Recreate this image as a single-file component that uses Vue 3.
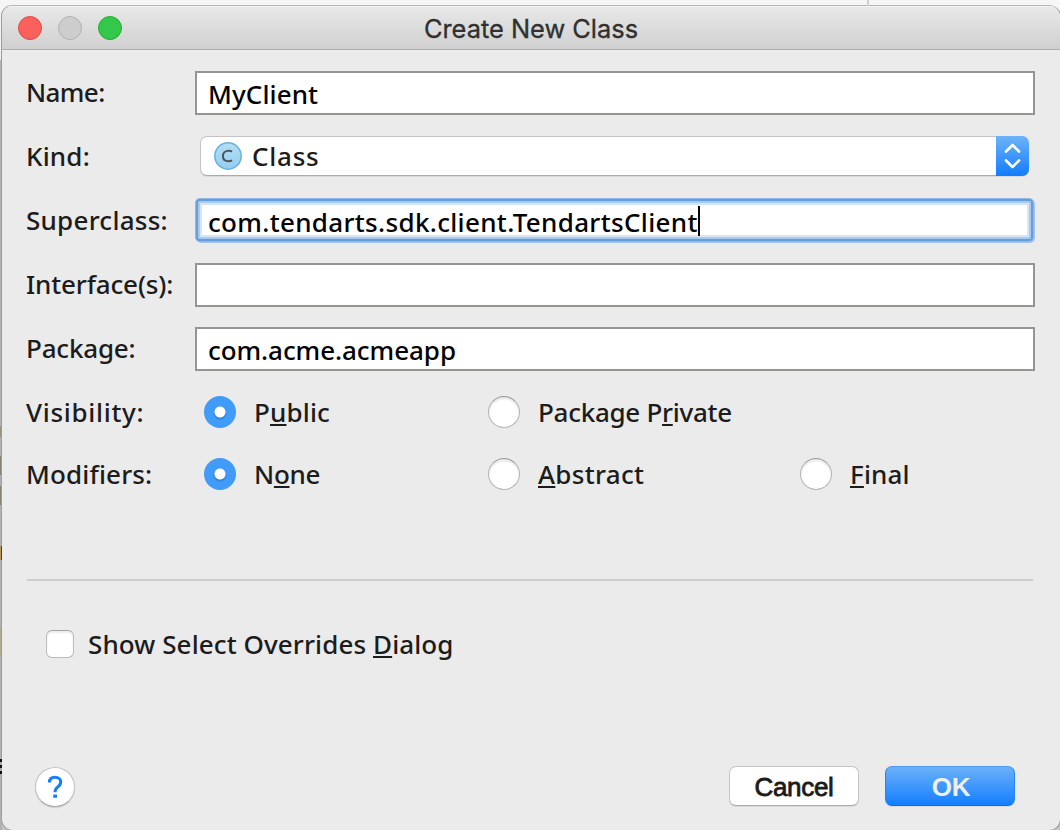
<script setup>
import { ref } from 'vue'

const name = ref('MyClient')
const superclass = ref('com.tendarts.sdk.client.TendartsClient')
const pkg = ref('com.acme.acmeapp')
</script>

<template>
  <div class="desktop">
    <span class="seam"></span>
    <span class="behind b1"></span>
    <span class="behind b2"></span>
    <span class="behind b3"></span>
    <span class="behind b4"></span>
    <span class="behind b5"></span>
    <span class="behind b6"></span>
    <section class="window">
      <header class="titlebar">
        <div class="lights">
          <i class="light red"></i><i class="light gray"></i><i class="light green"></i>
        </div>
        <h1>Create New Class</h1>
      </header>

      <main class="body">
        <div class="row">
          <label><span class="t-name">Name:</span></label>
          <div class="field"><span class="t-myclient">{{ name }}</span></div>
        </div>
        <div class="row">
          <label><span class="t-kind">Kind:</span></label>
          <div class="combo">
            <svg class="cicon" width="28" height="28" viewBox="0 0 28 28">
              <defs>
                <linearGradient id="cg" x1="0" y1="0" x2="0" y2="1">
                  <stop offset="0" stop-color="#b4def5" /><stop offset="1" stop-color="#93cff0" />
                </linearGradient>
              </defs>
              <circle cx="14" cy="14" r="13.2" fill="url(#cg)" stroke="#69b0df" stroke-width="1.5" />
              <path d="M18 9.6C17 8.9 16 8.7 14.7 8.7C11.2 8.7 8.9 10.9 8.9 14.1C8.9 17.3 11.2 19.3 14.6 19.3C16 19.3 17 19 18.1 18.4" fill="none" stroke="#4d565e" stroke-width="2" />
            </svg>
            <span class="t-class">Class</span>
            <div class="stepper">
              <svg width="33" height="40" viewBox="0 0 33 40">
                <path d="M10 15.5L16.5 9L23 15.5M10 24.5L16.5 31L23 24.5" fill="none" stroke="#fff" stroke-width="2.6" stroke-linecap="round" stroke-linejoin="round" />
              </svg>
            </div>
          </div>
        </div>
        <div class="row">
          <label><span class="t-super">Superclass:</span></label>
          <div class="field focus"><span class="t-tend">{{ superclass }}</span><i class="caret"></i></div>
        </div>
        <div class="row">
          <label><span class="t-iface">Interface(s):</span></label>
          <div class="field"></div>
        </div>
        <div class="row">
          <label><span class="t-package">Package:</span></label>
          <div class="field"><span class="t-acme">{{ pkg }}</span></div>
        </div>

        <div class="radios vis">
          <label><span class="t-vis">Visibility:</span></label>
          <div class="opt"><i class="radio on"></i><span class="t-public">P<u>u</u>blic</span></div>
          <div class="opt"><i class="radio"></i><span class="t-private">Package P<u>r</u>ivate</span></div>
        </div>
        <div class="radios mod">
          <label><span class="t-mod">Modifiers:</span></label>
          <div class="opt"><i class="radio on"></i><span class="t-none">N<u>o</u>ne</span></div>
          <div class="opt"><i class="radio"></i><span class="t-abs"><u>A</u>bstract</span></div>
          <div class="opt"><i class="radio"></i><span class="t-final"><u>F</u>inal</span></div>
        </div>

        <hr />

        <div class="check"><i class="box"></i><span class="t-show">Show Select Overrides <u>D</u>ialog</span></div>

        <footer>
          <button class="help" aria-label="Help">
            <svg width="40" height="40" viewBox="0 0 40 40">
              <path d="M14.4 15.6C14.4 12.3 16.6 10.3 20 10.3C23.4 10.3 25.7 12.3 25.7 15.1C25.7 17.3 24.6 18.6 22.9 19.9C20.9 21.4 20.1 22.4 20.1 24.6V25.2" fill="none" stroke="#167efc" stroke-width="3" />
              <rect x="18.2" y="27.4" width="3.8" height="3.4" rx="0.6" fill="#167efc" />
            </svg>
          </button>
          <button class="btn"><span class="t-cancel">Cancel</span></button>
          <button class="btn primary"><span class="t-ok">OK</span></button>
        </footer>
      </main>
    </section>
  </div>
</template>

<style>
html, body { margin: 0; overflow: hidden; }
</style>

<style scoped>
.desktop {
  position: relative;
  box-sizing: border-box;
  width: 1060px;
  height: 830px;
  padding: 5px 0 0 1px;
  overflow: hidden;
  background: linear-gradient(90deg, #b2b2b2 0, #b2b2b2 2px, #c4c4c4 2px) 0 60px / 100% 100% no-repeat, linear-gradient(#f6f6f6, #f0f0f0 60px);
  font-family: "Noto Sans", "Open Sans", sans-serif;
  font-weight: 500;
  font-size: 26px;
  line-height: 36px;
  color: #1c1c1c;
}
.seam { position: absolute; left: 867px; top: 0; width: 2px; height: 6px; background: #d0d0d0; }
.behind { position: absolute; left: 0; width: 1px; z-index: 2; }
.b1 { top: 426px; height: 11px; background: #969080; }
.b2 { top: 456px; height: 19px; background: #858070; }
.b3 { top: 486px; height: 19px; background: #858070; }
.b4 { top: 546px; height: 14px; width: 2px; background: linear-gradient(90deg, #b09a60 50%, #215a20 50%); }
.b5 { top: 626px; height: 30px; background: #b0aa92; }
.b6 { top: 759px; height: 15px; width: 2px; background: repeating-linear-gradient(#111 0, #111 3px, #aaa 3px, #aaa 6px); }
.window {
  box-sizing: border-box;
  width: 1060px;
  height: 826px;
  border: 1px solid #9d9d9d;
  border-top-color: #b4b4b4;
  border-radius: 11px 12px 12px 12px;
  background: #ebebeb;
  overflow: hidden;
}
.titlebar {
  position: relative;
  box-sizing: border-box;
  height: 44px;
  display: flex;
  align-items: center;
  justify-content: center;
  background: linear-gradient(#e9e9e9, #d0d0d0);
  border-bottom: 1px solid #aeaeae;
  box-shadow: inset 0 1px #f4f4f4;
}
.titlebar h1 {
  margin: 0;
  padding-top: 2px;
  font: 400 25.4px/36px Inter, Roboto, sans-serif;
  color: #303030;
  -webkit-text-stroke: 0.3px #303030;
}
.lights { position: absolute; left: 16px; top: 10px; display: flex; gap: 16px; }
.light { box-sizing: border-box; width: 24px; height: 24px; border-radius: 50%; border: 1px solid; }
.red { background: #fc605c; border-color: #de4a46; }
.gray { background: #cdcdcd; border-color: #b2b2b2; }
.green { background: #34c84a; border-color: #24aa35; }
.body { padding: 21px 0 0 24px; }
span { white-space: pre; }
.row {
  display: grid;
  grid-template-columns: 169px 840px;
  height: 44px;
  margin-bottom: 20px;
}
label { padding-top: 3px; }
.field {
  box-sizing: border-box;
  height: 44px;
  display: flex;
  border: 2px solid #949694;
  background: #fff;
  color: #000;
  padding: 3px 0 0 11px;
}
.focus {
  border-color: #659fdd;
  border-radius: 4px;
  box-shadow: inset 0 0 0 2px #a9caef, inset 0 0 0 4px #d7e6f7, 0 0 0 1px #90b8e7, 1px 1px 0 1px #a5c5ea;
  height: 42px;
  width: 837px;
  margin-left: 1px;
  padding: 3px 0 0 10px;
}
.focus .caret { width: 2px; height: 30px; margin-top: 2px; background: #000; }
.combo {
  box-sizing: border-box;
  width: 829px;
  height: 40px;
  margin: 1px 0 0 5px;
  display: flex;
  align-items: center;
  border: 1px solid #c4c4c4;
  border-bottom-color: #aaa;
  border-right: 0;
  border-radius: 7px;
  background: #fff;
  box-shadow: 0 1px 0 #dadada;
  padding-left: 13px;
}
.cicon { margin-right: 10px; }
.stepper {
  width: 33px;
  height: 40px;
  margin: -1px 0 -1px auto;
  border-radius: 0 7px 7px 0;
  background: linear-gradient(#6db3f8, #127cff);
}
svg { display: block; flex: none; }
.radios {
  display: grid;
  grid-template-columns: 178px 284px 312px 200px;
  align-items: center;
  height: 36px;
}
.radios label { padding: 0; }
.vis { margin-top: 23px; }
.mod { margin-top: 26px; }
.opt { display: flex; align-items: center; gap: 18px; }
.radio {
  box-sizing: border-box;
  width: 32px;
  height: 32px;
  border-radius: 50%;
  border: 1px solid #b5b5b5;
  border-top-color: #999;
  background: #fff;
  box-shadow: inset 0 2px 2px #e3e3e3;
}
.radio.on {
  border: 0;
  background: radial-gradient(circle at 50% 50%, #fff 0 5px, transparent 6px), radial-gradient(circle at 50% 54%, #2f7fd6 0 5px, #419bf9 7px);
  box-shadow: none;
}
u { text-decoration: underline 2px; text-underline-offset: 2px; text-decoration-skip-ink: none; }
hr { width: 1006px; height: 2px; margin: 87px 0 0 1px; border: 0; background: #cccccc; }
.check { display: flex; align-items: center; gap: 14px; height: 36px; margin: 45px 0 0 20px; }
.box {
  box-sizing: border-box;
  width: 28px;
  height: 28px;
  border: 1px solid #bcbcbc;
  border-top-color: #a4a4a4;
  border-radius: 6px;
  background: #fff;
  box-shadow: inset 0 2px 2px #ececec;
}
footer { display: flex; align-items: flex-start; margin-top: 104px; }
button { box-sizing: border-box; padding: 0; margin: 0; }
.help {
  width: 40px;
  height: 40px;
  margin: 1px 0 0 9px;
  border: 1px solid #c2c2c2;
  border-bottom-color: #ababab;
  border-radius: 50%;
  background: #fff;
  box-shadow: 0 1px 1px #cfcfcf;
}
.help svg { margin: -1px; }
.btn {
  width: 130px;
  height: 40px;
  margin-left: 654px;
  padding-top: 2px;
  border: 1px solid #c4c4c4;
  border-bottom-color: #aaa;
  border-radius: 7px;
  background: #fff;
  box-shadow: 0 1px 0 #dadada;
  font: 400 26px/36px "Liberation Sans", Arial, sans-serif;
  letter-spacing: -0.3px;
  color: #1a1a1a;
  -webkit-text-stroke: 0.8px #1a1a1a;
}
.primary {
  margin-left: 26px;
  padding-left: 2px;
  border-color: #4a9bf5 #2684f6 #0f6bff;
  background: linear-gradient(#6db3f8, #127cff) border-box;
  font-weight: 700;
  color: #efefef;
  -webkit-text-stroke: 0;
}
.t-name { letter-spacing: -0.6px; }
.t-kind { letter-spacing: 0.2px; }
.t-super { letter-spacing: 0.25px; }
.t-iface { letter-spacing: -0.15px; }
.t-package { letter-spacing: -0.2px; }
.t-vis { letter-spacing: 0.7px; }
.t-mod { letter-spacing: 0.15px; }
.t-public { letter-spacing: 0.15px; }
.t-private { letter-spacing: -0.28px; }
.t-none { letter-spacing: -0.3px; }
.t-abs { letter-spacing: 0.3px; }
.t-final { letter-spacing: 0.15px; }
.t-show { letter-spacing: 0.1px; }
.t-myclient { letter-spacing: 0.1px; }
.t-tend { letter-spacing: 0.33px; }
.t-acme { letter-spacing: -0.06px; }
.t-class { letter-spacing: 0.75px; }
</style>
